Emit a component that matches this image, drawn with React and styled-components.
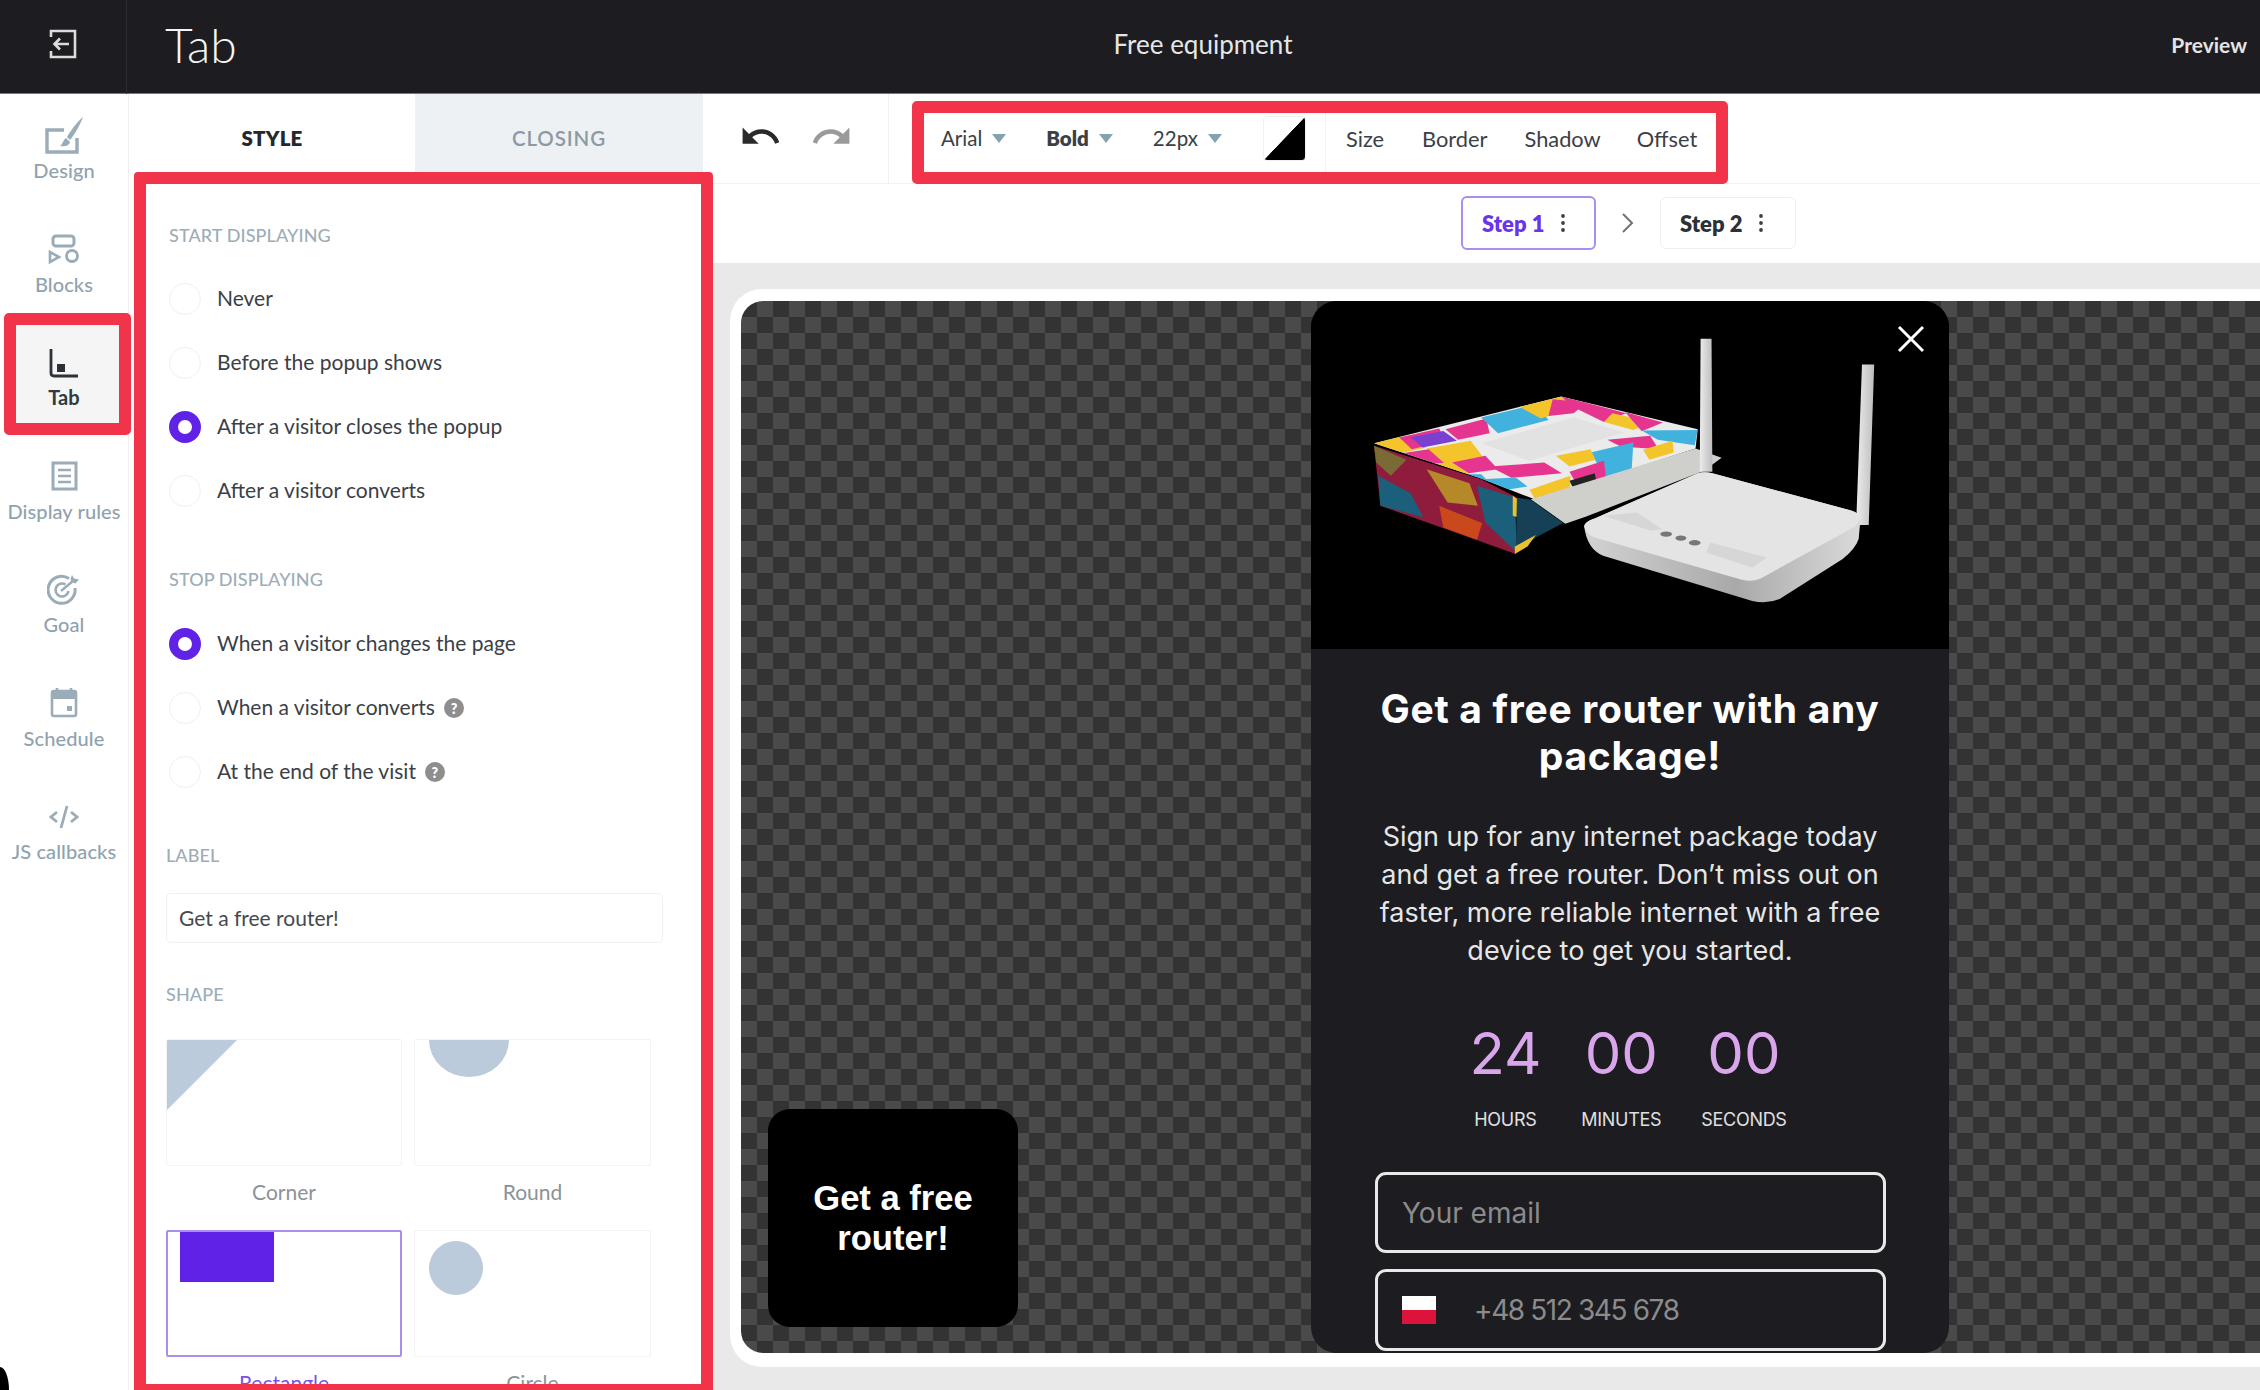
import React from "react";
import styled, { createGlobalStyle } from "styled-components";
import { MdUndo, MdRedo } from "react-icons/md";

const UI = `"Lato", "Liberation Sans", sans-serif`;
const POP = `"Inter", "Open Sans", sans-serif`;
const RED = "#f2344b";
const PURPLE = "#6122e8";
const SOFT_PURPLE = "#a88fec";

const Global = createGlobalStyle`
  html, body { margin: 0; padding: 0; overflow: hidden; background: #fff; }
  * { box-sizing: border-box; }
`;

const Shell = styled.div`
  width: 2260px; height: 1390px; display: flex; flex-direction: column;
  overflow: hidden; position: relative; font-family: ${UI}; background: #fff;
`;
const WindowCorner = styled.div`
  position: absolute; left: 0; bottom: 0; width: 9px; height: 23px;
  background: #000; border-top-right-radius: 100%;
`;

const TopBar = styled.header`
  height: 94px; flex: none; display: flex; align-items: center; padding-bottom: 5px;
  background: #1c1c21; border-bottom: 1px solid #77777c; color: #fff;
`;
const BackCell = styled.div`
  width: 127px; height: 94px; margin-bottom: -5px; padding-bottom: 5px; display: flex; align-items: center; justify-content: center;
  border-right: 1px solid #2b2b30;
`;
const PageTitle = styled.div`
  width: 900px; padding-left: 38px; font-size: 48px; font-weight: 300; color: #f4f4f4;
`;
const Campaign = styled.div`
  width: 352px; text-align: center; font-size: 26px; color: #e6e6e6;
`;
const Preview = styled.div`
  margin-left: auto; padding-right: 13px; font-size: 21px; font-weight: 700; color: #e4e4e4;
`;

const Body = styled.div`
  flex: 1; min-height: 0; display: flex; overflow: hidden;
`;

const Sidebar = styled.nav`
  width: 129px; flex: none; padding-top: 6px; border-right: 1px solid #efefef;
  display: flex; flex-direction: column; position: relative; z-index: 1;
`;
const SideItem = styled.div`
  height: 113.5px; flex: none; display: flex; flex-direction: column; align-items: center;
  padding-top: 16px; position: relative; isolation: isolate;
  ${(p) => p.$active && `
    &::before {
      content: ""; position: absolute; z-index: -1; left: 4px; right: -3px; top: -14px; bottom: 5.5px;
      border: 12px solid ${RED}; border-radius: 5px; background: #f5f5f5;
    }
  `}
`;
const SideIcon = styled.div`
  height: 39px; display: flex; align-items: center; justify-content: center;
`;
const SideLabel = styled.div`
  height: 32px; line-height: 31px; font-size: 20px; white-space: nowrap; letter-spacing: .1px;
  color: ${(p) => (p.$active ? "#2f3a42" : "#8fa2ae")};
  font-weight: ${(p) => (p.$active ? 700 : 500)};
`;

const LeftColumn = styled.div`
  width: 584px; flex: none; display: flex; flex-direction: column; min-height: 0;
`;
const Tabs = styled.div`
  height: 78px; flex: none; width: 574px; display: flex;
`;
const TabButton = styled.div`
  flex: ${(p) => (p.$active ? "0 0 286px" : "0 0 288px")};
  display: flex; align-items: center; justify-content: center; padding-top: 10px;
  font-size: 20.5px; letter-spacing: ${(p) => (p.$active ? ".2px" : ".9px")};
  font-weight: ${(p) => (p.$active ? 800 : 600)};
  color: ${(p) => (p.$active ? "#23282c" : "#8b9aa3")};
  background: ${(p) => (p.$active ? "#fff" : "#eef1f4")};
`;
const Panel = styled.section`
  flex: 1; min-height: 0; margin: 0 0 -6px 5px; overflow: hidden;
  border: 12px solid ${RED}; border-radius: 4px; padding: 41px 0 0 20px; background: #fff;
`;
const SectionLabel = styled.div`
  height: 20px; line-height: 20px; font-size: 18px; font-weight: 500; letter-spacing: .1px;
  color: #9cadb9; margin-left: ${(p) => p.$indent || 0}px; margin-top: ${(p) => p.$top || 0}px;
`;
const RadioList = styled.div`
  margin-top: ${(p) => p.$top}px; margin-left: 3px;
`;
const RadioRow = styled.div`
  height: 64px; display: flex; align-items: center; font-size: 21px; color: #3b4046;
`;
const Radio = styled.span`
  width: 32px; height: 32px; border-radius: 50%; flex: none; margin-right: 16px; background: #fff;
  border: ${(p) => (p.$on ? `9px solid ${PURPLE}` : "1px solid #f0f0f0")};
`;
const RowText = styled.span`
  margin-top: -3px;
`;
const Help = styled.span`
  width: 20px; height: 20px; border-radius: 50%; background: #8e8e8e; color: #fff; flex: none;
  margin-left: 9px; display: flex; align-items: center; justify-content: center;
  font-size: 14px; font-weight: 800;
`;
const LabelInput = styled.div`
  margin-top: 28px; width: 497px; height: 50px; border: 1px solid #f1f1f1; border-radius: 5px;
  padding: 0 0 1px 12px; display: flex; align-items: center; font-size: 21px; color: #44494e;
`;
const ShapeGrid = styled.div`
  margin-top: 35px; display: grid; grid-template-columns: 236px 237px; column-gap: 12px;
  row-gap: 27px; grid-auto-rows: 164px;
`;
const ShapeOption = styled.div`
  display: flex; flex-direction: column;
`;
const ShapeCard = styled.div`
  height: 127px; flex: none; overflow: hidden; border-radius: 2px;
  border: ${(p) => (p.$on ? `2px solid ${SOFT_PURPLE}` : "1px solid #f3f3f3")};
`;
const Shape = styled.div`
  ${(p) => p.$kind === "corner" && `width:70px;height:70px;background:#bccbdb;clip-path:polygon(0 0,100% 0,0 100%);`}
  ${(p) => p.$kind === "round" && `width:80px;height:37px;margin-left:14px;background:#bccbdb;border-radius:0 0 40px 40px / 0 0 37px 37px;`}
  ${(p) => p.$kind === "rect" && `width:94px;height:50px;margin-left:12px;background:${PURPLE};`}
  ${(p) => p.$kind === "circle" && `width:54px;height:54px;margin:10px 0 0 14px;background:#bccbdb;border-radius:50%;`}
`;
const ShapeName = styled.div`
  margin-top: 14px; height: 24px; line-height: 24px; text-align: center; font-size: 21px;
  color: ${(p) => (p.$on ? "#7b52e8" : "#8c9296")};
`;

const Workspace = styled.div`
  flex: 1; min-width: 0; display: flex; flex-direction: column;
`;
const Toolbar = styled.div`
  height: 90px; flex: none; display: flex; align-items: stretch; border-bottom: 1px solid #f2f2f2;
`;
const History = styled.div`
  width: 176px; flex: none; display: flex; align-items: center; gap: 28px; padding: 0 0 5px 26px;
  border-right: 1px solid #f0f0f0;
`;
const FontBar = styled.div`
  margin: 7px 0 0 23px; height: 83px; width: 816px; flex: none; display: flex; align-items: center;
  border: 12px solid ${RED}; border-radius: 5px; padding: 0 0 9px 17px; font-size: 20.5px; color: #3b4046;
`;
const Picker = styled.div`
  display: flex; align-items: center; gap: 10px; margin-right: ${(p) => p.$gap}px;
  font-weight: ${(p) => (p.$bold ? 800 : 400)};
`;
const Caret = styled.span`
  width: 0; height: 0; border-left: 7.5px solid transparent; border-right: 7.5px solid transparent;
  border-top: 9px solid #82a3af;
`;
const Swatch = styled.div`
  width: 43px; height: 45px; border-radius: 4px; border: 1px solid #f0f0f0; background:
    linear-gradient(to bottom right, #fff 0 49.5%, #000 50.5% 100%);
`;
const ToolDivider = styled.div`
  width: 1px; height: 59px; margin: 0 20px 0 19px; background: #f3f3f3; align-self: flex-start;
`;
const ToolLink = styled.div`
  margin-right: ${(p) => p.$gap}px; font-size: 21.8px;
`;
const StepRow = styled.div`
  height: 79px; flex: none; display: flex; align-items: center; padding-left: 748px; padding-bottom: 1px;
`;
const StepChip = styled.div`
  height: ${(p) => (p.$on ? 54 : 52)}px; width: ${(p) => (p.$on ? 135 : 136)}px; flex: none;
  display: flex; align-items: center; gap: 16px; padding-left: 19px; border-radius: 6px;
  font-size: 22px; font-weight: 800;
  color: ${(p) => (p.$on ? "#6a35e8" : "#2c3136")};
  border: ${(p) => (p.$on ? `2px solid ${SOFT_PURPLE}` : "1px solid #efefef")};
`;
const Chevron = styled.div`
  width: 64px; display: flex; justify-content: center; flex: none;
`;
const Canvas = styled.div`
  flex: 1; min-height: 0; background: #e9e9e9; padding: 26px 0 0 17px; overflow: hidden;
`;
const Frame = styled.div`
  width: 1560px; height: 1078px; background: #fff; border-radius: 32px 0 0 32px; padding: 12px 0 14px 11px;
`;
const Checker = styled.div`
  height: 100%; display: flex; align-items: flex-end; border-radius: 22px 0 0 22px; overflow: hidden;
  background: repeating-conic-gradient(#333333 0 25%, #4a4a4a 0 50%) 16px 0 / 32px 32px;
`;
const TabPreview = styled.div`
  width: 250px; height: 218px; flex: none; margin: 0 0 26px 27px; background: #000; border-radius: 22px;
  display: flex; align-items: center; justify-content: center; text-align: center;
  font-family: "Liberation Sans", Arial, sans-serif; font-weight: 700; font-size: 34.6px; line-height: 40px; color: #fff;
`;
const Popup = styled.div`
  width: 638px; height: 100%; flex: none; margin-left: 293px; background: #1c1c21; border-radius: 26px;
  overflow: hidden; position: relative; font-family: ${POP}; color: #fff;
`;
const PopupImage = styled.div`
  height: 348px; background: #000; display: flex;
`;
const CloseBtn = styled.div`
  position: absolute; right: 24px; top: 24px; width: 28px; height: 28px;
`;
const Heading = styled.h2`
  margin: 36px 0 0; text-align: center; font-size: 39px; line-height: 47px; font-weight: 700;
  letter-spacing: .7px; color: #fff;
`;
const Copy = styled.p`
  margin: 39px 0 0; text-align: center; font-size: 27px; line-height: 38px; font-weight: 400;
  color: #e6e6e6;
`;
const Timer = styled.div`
  margin-top: 53px; display: flex; justify-content: center; gap: 40px; padding-right: 4px;
`;
const TimerUnit = styled.div`
  display: flex; flex-direction: column; align-items: center;
`;
const Digits = styled.div`
  height: 60px; line-height: 60px; font-size: 58px; font-weight: 400; color: #d9a6ec;
`;
const Unit = styled.div`
  margin-top: 25px; height: 24px; line-height: 24px; font-size: 18px; color: #e0e0e0; letter-spacing: -.3px;
`;
const Field = styled.div`
  margin: ${(p) => p.$top}px 63px 0 64px; height: ${(p) => p.$h}px; border: 3px solid #e9e9e9; border-radius: 11px;
  display: flex; align-items: center; padding-left: 24px; font-size: 28px; color: #8b8b8b;
  letter-spacing: ${(p) => p.$track || 0}px;
`;
const Flag = styled.div`
  width: 34px; height: 28px; flex: none; margin-right: 38px;
  background: linear-gradient(#fff 0 50%, #dc143c 50% 100%);
`;

const Stroke = { fill: "none", stroke: "#9aacb8", strokeWidth: 2.6 };

const BackIcon = () => (
  <svg width="30" height="30" viewBox="0 0 30 30" fill="none" stroke="#dcdcdc" strokeWidth="2.6">
    <path d="M3 8V2h24v26H3v-6" />
    <path d="M21 15H7M12 9.5 6.5 15l5.5 5.5" />
  </svg>
);
const DesignIcon = () => (
  <svg width="40" height="40" viewBox="0 0 40 40">
    <path d="M20 14H3v22h30V22" {...Stroke} strokeWidth="3.4" />
    <path d="M39 1C36 9 31 18 26 24l-3-3C27 14 33 6 39 1Z" fill="#9aacb8" />
    <path d="M22 22l4 4c-1 4-5 5-10 4 3-2 3-6 6-8Z" fill="#9aacb8" />
  </svg>
);
const BlocksIcon = () => (
  <svg width="32" height="30" viewBox="0 0 32 30">
    <rect x="5" y="2" width="21" height="10" rx="3" {...Stroke} strokeWidth="3" />
    <path d="M2 18v10l9-5Z" {...Stroke} strokeWidth="2.6" />
    <circle cx="24" cy="22" r="5.5" {...Stroke} strokeWidth="2.8" />
  </svg>
);
const TabIcon = () => (
  <svg width="30" height="30" viewBox="0 0 30 30">
    <path d="M2 1v24q0 3 3 3h24" fill="none" stroke="#2d3237" strokeWidth="2.8" />
    <rect x="8" y="16" width="8" height="8" fill="#2d3237" />
  </svg>
);
const RulesIcon = () => (
  <svg width="27" height="30" viewBox="0 0 27 30">
    <rect x="2" y="2" width="23" height="26" {...Stroke} strokeWidth="3" />
    <path d="M7 9h13M7 15h13M7 21h13" {...Stroke} strokeWidth="2.4" />
  </svg>
);
const GoalIcon = () => (
  <svg width="34" height="32" viewBox="0 0 34 32">
    <path d="M22 4.5A13.5 13.5 0 1 0 28 14" {...Stroke} strokeWidth="3" />
    <path d="M18.5 10.5A6.5 6.5 0 1 0 21.5 17" {...Stroke} strokeWidth="2.6" />
    <path d="M14 17 26 7" {...Stroke} strokeWidth="2.4" />
    <path d="M25 1l2 3.5 5 1-3.5 4-4-1.5-1-3Z" fill="#9aacb8" />
  </svg>
);
const ScheduleIcon = () => (
  <svg width="28" height="30" viewBox="0 0 28 30">
    <path d="M7 0v6M21 0v6" {...Stroke} />
    <rect x="2" y="3" width="24" height="25" rx="2" {...Stroke} strokeWidth="2.6" />
    <rect x="2" y="3" width="24" height="8" fill="#9aacb8" />
    <rect x="17" y="18" width="5" height="5" fill="#9aacb8" />
  </svg>
);
const CodeIcon = () => (
  <svg width="30" height="26" viewBox="0 0 30 26">
    <path d="M8 8 2 13l6 5M22 8l6 5-6 5M18 2l-6 22" {...Stroke} strokeWidth="2.8" />
  </svg>
);
const Dots = () => (
  <svg width="6" height="20" viewBox="0 0 6 20" fill="currentColor" color="#3b4046">
    <circle cx="3" cy="3" r="1.9" /><circle cx="3" cy="10" r="1.9" /><circle cx="3" cy="17" r="1.9" />
  </svg>
);

const topPatches = [
  ["#f4c52a", "175,462 240,442 300,475 225,495"],
  ["#e6368f", "235,445 330,418 345,455 265,480"],
  ["#7a3fd0", "262,444 340,425 372,455 290,475"],
  ["#f4c52a", "300,478 405,455 435,505 345,525"],
  ["#e6368f", "345,420 442,388 450,432 375,452"],
  ["#e6368f", "225,495 305,480 345,525 270,525"],
  ["#3fb2dd", "430,385 560,345 590,392 470,432"],
  ["#f4c52a", "520,352 622,322 662,352 572,388"],
  ["#e6368f", "600,330 680,340 650,372 590,380"],
  ["#e6368f", "622,322 775,372 722,398 640,348"],
  ["#f4c52a", "742,372 835,398 792,422 722,398"],
  ["#e6368f", "772,368 862,400 812,426"],
  ["#3fb2dd", "812,424 945,422 938,468 850,452"],
  ["#e6368f", "730,452 832,440 852,480 762,472"],
  ["#f4c52a", "815,482 885,455 888,490 830,512"],
  ["#3fb2dd", "690,490 792,460 788,540 725,562"],
  ["#f4c52a", "608,500 690,480 702,512 640,532"],
  ["#e6368f", "640,548 722,515 727,566 660,592"],
  ["#f4c52a", "545,602 642,560 642,612 560,636"],
  ["#e6368f", "450,532 580,520 622,552 502,566"],
  ["#3fb2dd", "430,570 512,565 540,592 490,602"],
  ["#e6368f", "360,520 440,500 470,540 400,552"],
  ["#f4c52a", "270,525 360,520 400,552 340,560"],
  ["#3fb2dd", "340,555 430,555 450,580 400,590"],
  ["#222", "640,575 700,552 705,580 650,600"],
];
const frontPatches = [
  ["#1e5f7a", "185,560 262,612 292,684 190,650"],
  ["#b5892a", "300,540 402,582 422,650 350,640"],
  ["#1e5f7a", "420,590 510,625 515,790 440,700"],
  ["#c94a1f", "330,650 432,702 420,752 340,715"],
  ["#7a6a34", "175,470 252,512 215,560 180,520"],
  ["#e8c030", "505,620 530,640 530,690 505,680"],
  ["#123f55", "515,625 548,632 625,702 560,745 512,790"],
  ["#e8c030", "510,772 560,738 540,772 510,795"],
];

const RouterArt = () => (
  <svg width="100%" height="100%" viewBox="25 35 1518 1045" preserveAspectRatio="none">
    <defs>
      <filter id="soft"><feGaussianBlur stdDeviation="1.6" /></filter>
      <linearGradient id="bodySide" x1="0" y1="0" x2="1" y2="0">
        <stop offset="0" stopColor="#d2d2d2" /><stop offset=".55" stopColor="#a9a9a9" /><stop offset="1" stopColor="#dadada" />
      </linearGradient>
      <linearGradient id="antenna" x1="0" y1="0" x2="1" y2="0">
        <stop offset="0" stopColor="#ececec" /><stop offset="1" stopColor="#bdbdbd" />
      </linearGradient>
      <clipPath id="lidTop"><polygon points="175,462 620,322 945,420 940,478 560,632 430,568" /></clipPath>
    </defs>
    <g filter="url(#soft)">
      <polygon points="175,470 430,570 510,622 512,795 190,650" fill="#8f1c3c" />
      {frontPatches.map(([c, pts]) => <polygon key={pts} fill={c} points={pts} />)}
      <polygon points="175,462 620,322 945,420 940,478 560,632 430,568" fill="#ebebeb" />
      <g clipPath="url(#lidTop)">
        {topPatches.map(([c, pts]) => <polygon key={pts} fill={c} points={pts} />)}
      </g>
      <polygon points="430,462 650,385 770,430 545,515" fill="#e2e2e2" />
      <polygon points="548,630 940,478 1002,506 960,545 680,682 630,704" fill="#cfcfcc" />
      <polygon points="952,148 978,148 980,548 950,548" fill="url(#antenna)" />
      <polygon points="1336,226 1365,226 1352,708 1322,708" fill="url(#antenna)" />
      <path d="M675 712 C676 700 690 692 700 688 L945 552 Q960 546 980 552 L1310 664 Q1332 672 1332 696 L1328 750 Q1320 780 1290 810 L1140 930 Q1110 946 1075 936 L720 800 Q682 780 675 712Z" fill="url(#bodySide)" />
      <path d="M675 712 C676 700 690 692 700 688 L945 552 Q960 546 980 552 L1310 664 Q1332 672 1332 690 L1320 712 L1095 868 Q1075 880 1050 872 L700 745 Q680 735 675 712Z" fill="#e4e4e4" />
      <path d="M720 680 800 670 860 720 835 725ZM975 760 1110 805 1075 835 965 790Z" fill="#d6d6d6" />
      <ellipse cx="870" cy="735" rx="14" ry="8" fill="#777" />
      <ellipse cx="905" cy="747" rx="13" ry="8" fill="#777" />
      <ellipse cx="938" cy="761" rx="14" ry="8" fill="#777" />
    </g>
  </svg>
);

const sideItems = [
  ["Design", DesignIcon],
  ["Blocks", BlocksIcon],
  ["Tab", TabIcon, true],
  ["Display rules", RulesIcon],
  ["Goal", GoalIcon],
  ["Schedule", ScheduleIcon],
  ["JS callbacks", CodeIcon],
];

const Row = ({ on, help, children }) => (
  <RadioRow>
    <Radio $on={on} />
    <RowText>{children}</RowText>
    {help && <Help>?</Help>}
  </RadioRow>
);

export default function App() {
  return (
    <Shell>
      <Global />
      <TopBar>
        <BackCell><BackIcon /></BackCell>
        <PageTitle>Tab</PageTitle>
        <Campaign>Free equipment</Campaign>
        <Preview>Preview</Preview>
      </TopBar>
      <Body>
        <Sidebar>
          {sideItems.map(([label, Icon, active]) => (
            <SideItem key={label} $active={active}>
              <SideIcon><Icon /></SideIcon>
              <SideLabel $active={active}>{label}</SideLabel>
            </SideItem>
          ))}
        </Sidebar>
        <LeftColumn>
          <Tabs>
            <TabButton $active>STYLE</TabButton>
            <TabButton>CLOSING</TabButton>
          </Tabs>
          <Panel>
            <SectionLabel $indent={3}>START DISPLAYING</SectionLabel>
            <RadioList $top={22}>
              <Row>Never</Row>
              <Row>Before the popup shows</Row>
              <Row on>After a visitor closes the popup</Row>
              <Row>After a visitor converts</Row>
            </RadioList>
            <SectionLabel $indent={3} $top={46}>STOP DISPLAYING</SectionLabel>
            <RadioList $top={23}>
              <Row on>When a visitor changes the page</Row>
              <Row help>When a visitor converts</Row>
              <Row help>At the end of the visit</Row>
            </RadioList>
            <SectionLabel $top={41}>LABEL</SectionLabel>
            <LabelInput>Get a free router!</LabelInput>
            <SectionLabel $top={41}>SHAPE</SectionLabel>
            <ShapeGrid>
              <ShapeOption><ShapeCard><Shape $kind="corner" /></ShapeCard><ShapeName>Corner</ShapeName></ShapeOption>
              <ShapeOption><ShapeCard><Shape $kind="round" /></ShapeCard><ShapeName>Round</ShapeName></ShapeOption>
              <ShapeOption><ShapeCard $on><Shape $kind="rect" /></ShapeCard><ShapeName $on>Rectangle</ShapeName></ShapeOption>
              <ShapeOption><ShapeCard><Shape $kind="circle" /></ShapeCard><ShapeName>Circle</ShapeName></ShapeOption>
            </ShapeGrid>
          </Panel>
        </LeftColumn>
        <Workspace>
          <Toolbar>
            <History>
              <MdUndo size={43} color="#2a2a2a" />
              <MdRedo size={43} color="#9a9a9a" />
            </History>
            <FontBar>
              <Picker $gap={40}>Arial<Caret /></Picker>
              <Picker $gap={40} $bold>Bold<Caret /></Picker>
              <Picker $gap={41}>22px<Caret /></Picker>
              <Swatch />
              <ToolDivider />
              <ToolLink $gap={38}>Size</ToolLink>
              <ToolLink $gap={37}>Border</ToolLink>
              <ToolLink $gap={36}>Shadow</ToolLink>
              <ToolLink $gap={0}>Offset</ToolLink>
            </FontBar>
          </Toolbar>
          <StepRow>
            <StepChip $on>Step 1 <Dots /></StepChip>
            <Chevron>
              <svg width="14" height="22" viewBox="0 0 14 22" fill="none" stroke="#6d7478" strokeWidth="2"><path d="M2 2l9 9-9 9" /></svg>
            </Chevron>
            <StepChip>Step 2 <Dots /></StepChip>
          </StepRow>
          <Canvas>
            <Frame>
              <Checker>
                <TabPreview>Get a free<br />router!</TabPreview>
                <Popup>
                  <PopupImage><RouterArt /></PopupImage>
                  <CloseBtn>
                    <svg width="28" height="28" viewBox="0 0 28 28" stroke="#fff" strokeWidth="3" fill="none"><path d="M2 2l24 24M26 2 2 26" /></svg>
                  </CloseBtn>
                  <Heading>Get a free router with any<br />package!</Heading>
                  <Copy>Sign up for any internet package today<br />and get a free router. Don’t miss out on<br />faster, more reliable internet with a free<br />device to get you started.</Copy>
                  <Timer>
                    <TimerUnit><Digits>24</Digits><Unit>HOURS</Unit></TimerUnit>
                    <TimerUnit><Digits>00</Digits><Unit>MINUTES</Unit></TimerUnit>
                    <TimerUnit><Digits>00</Digits><Unit>SECONDS</Unit></TimerUnit>
                  </Timer>
                  <Field $top={40} $h={81}>Your email</Field>
                  <Field $top={16} $h={82} $track={-1.4}><Flag />+48 512 345 678</Field>
                </Popup>
              </Checker>
            </Frame>
          </Canvas>
        </Workspace>
      </Body>
      <WindowCorner />
    </Shell>
  );
}
